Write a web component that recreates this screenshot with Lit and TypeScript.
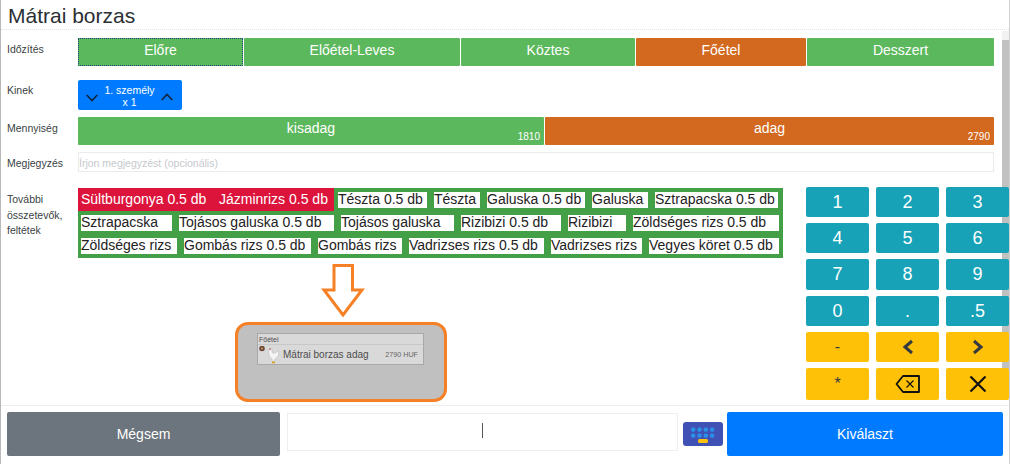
import { LitElement, html, css, svg } from "lit";
import { customElement } from "lit/decorators.js";

type Tag = [string, number, boolean?];
const ROWS: Tag[][] = [
  [["Sültburgonya 0.5 db", 136, true], ["Jázminrizs 0.5 db", 120, true], ["Tészta 0.5 db", 89], ["Tészta", 46], ["Galuska 0.5 db", 98], ["Galuska", 56], ["Sztrapacska 0.5 db", 123]],
  [["Sztrapacska", 91], ["Tojásos galuska 0.5 db", 155], ["Tojásos galuska", 113], ["Rizibizi 0.5 db", 100], ["Rizibizi", 58], ["Zöldséges rizs 0.5 db", 146]],
  [["Zöldséges rizs", 96], ["Gombás rizs 0.5 db", 127], ["Gombás rizs", 84], ["Vadrizses rizs 0.5 db", 135], ["Vadrizses rizs", 91], ["Vegyes köret 0.5 db", 130]],
];
const STAGES: [string, number, boolean?][] = [["Előre", 165], ["Előétel-Leves", 216], ["Köztes", 174], ["Főétel", 170, true], ["Desszert", 187]];

const chevron = (up: boolean) => html`<svg class="chev" viewBox="0 0 12 8" width="12" height="8"><path d=${up ? "M.7 7 6 1.5 11.300 7" : "M.7 1 6 6.500 11.300 1"} fill="none" stroke="#14233a" stroke-width="1.6"/></svg>`;
const dots = () => {
  const out = [];
  for (let y = 0; y < 2; y++) for (let x = 0; x < 4; x++) out.push(svg`<rect x=${8 + x * 6.3} y=${5.5 + y * 6} width="4.4" height="4.2" rx="1.6" fill="#2a8fe6"/>`);
  return out;
};

@customElement("app-root")
export class AppRoot extends LitElement {
  static styles = css`
    :host { display: block; width: 1010px; height: 464px; overflow: hidden; background: #fff; font-family: "Liberation Sans", Arial, sans-serif; color: #212529; }
    .page { position: relative; height: 464px; box-sizing: border-box; border-left: 1px solid #b9b9b9; border-right: 1px solid #d0d0d0; }
    .title { height: 30px; box-sizing: border-box; border-bottom: 1px dotted #dfe3e3; margin: 0; padding: 3px 0 0 7px; font-size: 21px; line-height: 25px; font-weight: 400; color: #2b2f33; }
    .scroll { position: absolute; right: 0; top: 31px; bottom: 95px; width: 7px; background: #c1c1c1; border-top: 9px solid #f1f1f1; }
    .body { height: 374px; box-sizing: border-box; padding: 8px 0 0 6px; }
    .row { display: flex; }
    .label { width: 71px; flex: none; font-size: 10.5px; line-height: 15px; color: #3a3f44; }
    .l-stage { margin-top: 4px; }
    .l-who { margin-top: 17px; }
    .l-amount { margin-top: 11px; }
    .l-note { margin-top: 11px; }
    .l-tags { margin-top: 4px; line-height: 15.500px; }
    .stages { display: flex; gap: 1px; height: 28px; }
    .btn { display: flex; align-items: center; justify-content: center; box-sizing: border-box; color: #fff; background: #5cb85c; border-radius: 1px; font-size: 14px; }
    .stage { padding-bottom: 5px; }
    .orange { background: #d2691e; }
    .focus { outline: 1px dotted #1c3f7a; outline-offset: -1px; }
    .who { width: 104px; height: 30px; background: #007bff; border-radius: 2px; display: flex; align-items: center; justify-content: space-between; padding: 0 9px 0 8px; box-sizing: border-box; color: #fff; font-size: 10.5px; line-height: 12px; text-align: center; margin-top: 14px; }
    .who-text { padding-top: 1px; }
    .chev { flex: none; margin-top: 6px; }
    .chev:last-child { margin-top: 3px; }
    .amounts { display: flex; gap: 1px; height: 28px; margin-top: 7px; }
    .amount { position: relative; padding-bottom: 6px; }
    .price { position: absolute; right: 4px; bottom: 2px; font-size: 10px; line-height: 12px; }
    .note { width: 916px; height: 20px; box-sizing: border-box; margin-top: 7px; border: 1px solid #e9ecef; color: #c6c9cc; font-size: 10.5px; line-height: 20px; }
    .work { display: flex; margin-top: 16px; }
    .left { width: 800px; flex: none; }
    .tagbox { display: flex; }
    .tags { width: 705px; height: 70px; background: #43a047; box-sizing: border-box; padding: 4px 0 0 3px; display: flex; flex-direction: column; gap: 7px; }
    .tagrow { display: flex; gap: 7px; height: 16px; }
    .tag { flex: none; height: 16px; box-sizing: border-box; background: #fff; color: #222; font-size: 14px; line-height: 15px; white-space: nowrap; }
    .first { height: 23px; margin: -4px 0 0 -3px; background: #dc143c; color: #fff; display: flex; align-items: center; padding-left: 3px; }
    .first + .first { padding-left: 5px; margin-left: -7px; }
    .first + .first + .tag { margin-left: -3px; }
    .annot { display: flex; flex-direction: column; margin: 5px 0 0 228px; width: 212px; }
    .arrow { display: block; margin-left: 86px; }
    .shot { width: 212px; height: 80px; margin-top: 5px; box-sizing: border-box; background: #c0c0c0; border: 3px solid #f58025; border-radius: 13px; padding: 8px 0 0 19px; }
    .card { width: 167px; height: 32px; box-sizing: border-box; background: #d9d9d9; border: 1px solid #a8a8a8; color: #4d4d4d; }
    .card-head { font-size: 7px; line-height: 10px; padding: 1px 0 0 1px; border-bottom: 1px solid #c8c8c8; height: 11px; box-sizing: border-box; }
    .card-line { display: flex; align-items: center; height: 19px; font-size: 10px; padding-right: 5px; }
    .card-name { flex: 1; margin-left: 2px; }
    .card-price { font-size: 7.2px; color: #666; }
    .pad { display: grid; grid-template-columns: repeat(3, 63px); column-gap: 7px; grid-template-rows: 30px 30px 31px 30px 30px 32px; row-gap: 6px; position: relative; margin-top: -1px; margin-left: -1px; z-index: 1; height: 213px; }
    .key { display: flex; align-items: center; justify-content: center; border-radius: 2px; background: #17a2b8; color: #fff; font-size: 18px; }
    .key.y { background: #ffc107; color: #343a40; font-size: 16px; }
    .foot { position: absolute; left: 0; right: 0; top: 405px; height: 59px; border-top: 1px solid #eceeef; box-sizing: border-box; padding: 6px 6px 0 6px; display: flex; z-index: 2; background: #fff; width: 1008px; }
    .cancel { width: 273px; height: 44px; background: #6c757d; border-radius: 2px; color: #fff; display: flex; align-items: center; justify-content: center; font-size: 14px; flex: none; }
    .field { width: 391px; height: 38px; margin: 1px 0 0 7px; border: 1px solid #eceeef; box-sizing: border-box; flex: none; display: flex; align-items: center; justify-content: center; padding-bottom: 3px; }
    .caret { width: 1px; height: 15px; background: #555; margin-left: -1px; }
    .kbd { flex: none; margin: 10px 4px 0 5px; display: block; }
    .ok { width: 276px; height: 44px; background: #007bff; border-radius: 2px; color: #fff; display: flex; align-items: center; justify-content: center; font-size: 14px; flex: none; }
  `;

  private tag(t: Tag) {
    return html`<div class="tag ${t[2] ? "first" : ""}" style="width:${t[1]}px">${t[0]}</div>`;
  }

  render() {
    const keys = ["1", "2", "3", "4", "5", "6", "7", "8", "9", "0", ".", ".5"];
    return html`<div class="page">
      <h1 class="title">Mátrai borzas</h1>
      <div class="scroll"></div>
      <div class="body">
        <div class="row">
          <div class="label l-stage">Időzítés</div>
          <div class="stages">
            ${STAGES.map((s, i) => html`<div class="btn stage ${s[2] ? "orange" : ""} ${i === 0 ? "focus" : ""}" style="width:${s[1]}px">${s[0]}</div>`)}
          </div>
        </div>
        <div class="row">
          <div class="label l-who">Kinek</div>
          <div class="who">${chevron(false)}<span class="who-text">1. személy<br />x 1</span>${chevron(true)}</div>
        </div>
        <div class="row">
          <div class="label l-amount">Mennyiség</div>
          <div class="amounts">
            <div class="btn amount" style="width:466px">kisadag<span class="price">1810</span></div>
            <div class="btn amount orange" style="width:449px">adag<span class="price">2790</span></div>
          </div>
        </div>
        <div class="row">
          <div class="label l-note">Megjegyzés</div>
          <div class="note">Írjon megjegyzést (opcionális)</div>
        </div>
        <div class="work">
          <div class="left">
            <div class="tagbox">
              <div class="label l-tags">További összetevők, feltétek</div>
              <div class="tags">
                ${ROWS.map((r) => html`<div class="tagrow">${r.map((t) => this.tag(t))}</div>`)}
              </div>
            </div>
            <div class="annot">
              <svg class="arrow" width="44" height="54" viewBox="0 0 44 54"><path d="M13 2.500H31.500V27H41L22 52 3 27H13Z" fill="none" stroke="#f58025" stroke-width="3"/></svg>
              <div class="shot">
                <div class="card">
                  <div class="card-head">Főétel</div>
                  <div class="card-line">
                    <svg width="23" height="18" viewBox="0 0 23 18">
                      <circle cx="4" cy="2.500" r="2.800" fill="#6b4a3a"/>
                      <circle cx="4" cy="2.500" r="1" fill="#c9a24a"/>
                      <path d="M11 3.500c1.500-1 3-.2 3 1.500 0 1.800 1 2.800 3 2l3.500-2.500c.8 3.800-.3 7-3.500 8.500l-.5 2.500h-2l-.5-2.500C11 11.500 10 7.500 11 3.500Z" fill="#f4f4f4" stroke="#b5b5b5" stroke-width=".6"/>
                      <path d="M11 3.500l1-1.500 1 1.500Z" fill="#c0392b"/>
                      <rect x="14" y="15.500" width="3" height="1.800" fill="#d9a32e"/>
                    </svg>
                    <span class="card-name">Mátrai borzas adag</span>
                    <span class="card-price">2790 HUF</span>
                  </div>
                </div>
              </div>
            </div>
          </div>
          <div class="pad">
            ${keys.map((k) => html`<div class="key">${k}</div>`)}
            <div class="key y">-</div>
            <div class="key y"><svg width="12" height="16" viewBox="0 0 12 16"><path d="M10 2 3 8l7 6" fill="none" stroke="#343a40" stroke-width="3"/></svg></div>
            <div class="key y"><svg width="12" height="16" viewBox="0 0 12 16"><path d="M2 2l7 6-7 6" fill="none" stroke="#343a40" stroke-width="3"/></svg></div>
            <div class="key y">*</div>
            <div class="key y"><svg width="26" height="20" viewBox="0 0 26 20"><path d="M8 2h16v16H8L1.500 10Z" fill="none" stroke="#111" stroke-width="1.800" stroke-linejoin="round"/><path d="M11.500 6.500l7 7m0-7-7 7" fill="none" stroke="#111" stroke-width="1.200"/></svg></div>
            <div class="key y"><svg width="18" height="18" viewBox="0 0 18 18"><path d="M1.500 1.500l15 15M16.500 1.500l-15 15" fill="none" stroke="#111" stroke-width="2.200"/></svg></div>
          </div>
        </div>
      </div>
      <div class="foot">
        <div class="cancel">Mégsem</div>
        <div class="field"><span class="caret"></span></div>
        <svg class="kbd" width="40" height="24" viewBox="0 0 40 24">
          <rect width="40" height="24" rx="3" fill="#3f51b5"/>
          ${dots()}
          <rect x="15" y="17" width="10" height="4" rx="1.500" fill="#ffc107"/>
        </svg>
        <div class="ok">Kiválaszt</div>
      </div>
    </div>`;
  }
}
